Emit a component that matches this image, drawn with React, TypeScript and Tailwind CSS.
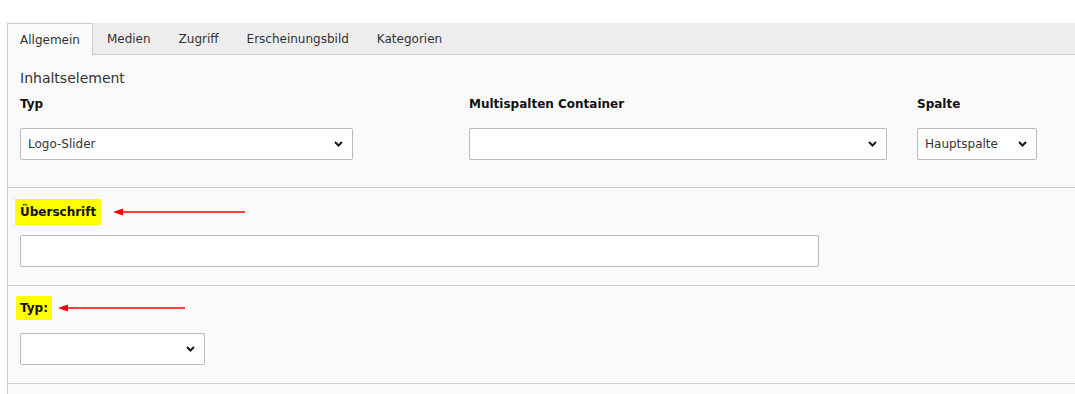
import React from 'react';

// kleiner Pfeil nach unten für die Auswahlfelder
function Chevron() {
  return (
    <svg width="9" height="6" viewBox="0 0 9 6" className="shrink-0">
      <path d="M1 1l3.5 3.5L8 1" fill="none" stroke="#1a1a1a" strokeWidth="2" />
    </svg>
  );
}

function SelectBox({ value, className }: { value?: string; className: string }) {
  return (
    <div
      className={`flex h-8 items-center justify-between rounded-[2px] border border-[#bbb] bg-white pl-[7px] pr-[9px] text-[12px] text-[#333] ${className}`}
    >
      <span>{value ?? ''}</span>
      <Chevron />
    </div>
  );
}

// roter Markierungspfeil (Annotation im Screenshot)
function RedArrow({ length }: { length: number }) {
  return (
    <svg width={length} height="8" viewBox={`0 0 ${length} 8`} className="shrink-0">
      <line x1="8" y1="4" x2={length} y2="4" stroke="#ff0000" strokeWidth="1.6" />
      <polygon points="0,4 10,0.5 10,7.5" fill="#ff0000" />
    </svg>
  );
}

const tabs = ['Allgemein', 'Medien', 'Zugriff', 'Erscheinungsbild', 'Kategorien'];

export default function App() {
  return (
    <div className="h-[394px] w-[1075px] overflow-hidden bg-white font-['DejaVu_Sans',Verdana,sans-serif] text-[#333]">
      <div className="h-[23px]" />

      <div className="ml-[7px]">
        {/* Reiter */}
        <div className="flex h-8 border-b border-[#ccc] bg-[#ededed] text-[12px]">
          {tabs.map((t, i) => (
            <div
              key={t}
              className={
                i === 0
                  ? '-mb-px flex items-center border border-b-0 border-[#ccc] bg-[#fafafa] px-[12px] text-[#333]'
                  : 'flex items-center border border-transparent px-[13px] text-[#333]'
              }
            >
              {t}
            </div>
          ))}
        </div>

        <div className="flex flex-col border-l border-[#ccc] bg-[#fafafa]">
          {/* Inhaltselement */}
          <div className="h-[133px] border-b border-[#ccc] pl-[12px] pt-[13px]">
            <div className="text-[14px] leading-5 text-[#333]">Inhaltselement</div>
            <div className="mt-2 flex">
              <div className="w-[333px]">
                <div className="text-[12px] font-bold leading-4 text-[#111]">Typ</div>
                <SelectBox value="Logo-Slider" className="mt-4 w-[333px]" />
              </div>
              <div className="ml-[116px] w-[418px]">
                <div className="text-[12px] font-bold leading-4 text-[#111]">Multispalten Container</div>
                <SelectBox className="mt-4 w-[418px]" />
              </div>
              <div className="ml-[30px] w-[120px]">
                <div className="text-[12px] font-bold leading-4 text-[#111]">Spalte</div>
                <SelectBox value="Hauptspalte" className="mt-4 w-[120px]" />
              </div>
            </div>
          </div>

          {/* Überschrift */}
          <div className="h-[98px] border-b border-[#ccc] pl-[7px] pt-[11px]">
            <div className="flex items-center">
              <div className="flex h-[26px] items-center bg-[#ffff00] px-[5px] text-[12px] font-bold text-[#111]">
                Überschrift
              </div>
              <div className="ml-[12px]">
                <RedArrow length={132} />
              </div>
            </div>
            <div className="ml-[5px] mt-[10px] h-8 w-[799px] rounded-[2px] border border-[#bbb] bg-white" />
          </div>

          {/* Typ */}
          <div className="h-[98px] border-b border-[#ccc] pl-[8px] pt-[10px]">
            <div className="flex items-center">
              <div className="flex h-6 items-center bg-[#ffff00] px-[4px] text-[12px] font-bold text-[#111]">
                Typ:
              </div>
              <div className="ml-[6px]">
                <RedArrow length={127} />
              </div>
            </div>
            <SelectBox className="ml-[4px] mt-[13px] w-[185px]" />
          </div>

          <div className="h-4" />
        </div>
      </div>
    </div>
  );
}
